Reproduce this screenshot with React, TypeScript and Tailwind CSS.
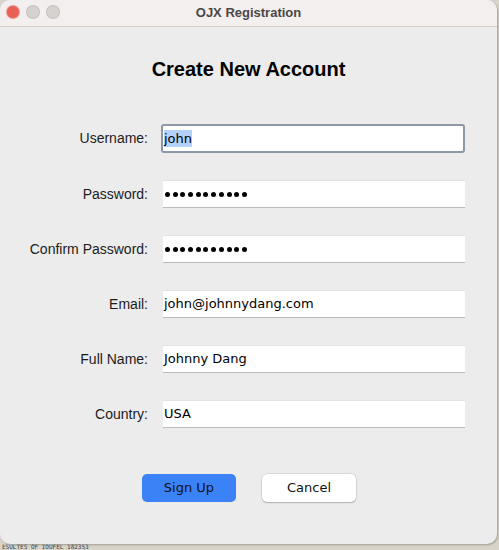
const fields = [
  { label: 'Username:', value: 'john', kind: 'focused' },
  { label: 'Password:', value: '•••••••••••', kind: 'password' },
  { label: 'Confirm Password:', value: '•••••••••••', kind: 'password' },
  { label: 'Email:', value: 'john@johnnydang.com', kind: 'text' },
  { label: 'Full Name:', value: 'Johnny Dang', kind: 'text' },
  { label: 'Country:', value: 'USA', kind: 'text' },
];

const Dots = ({ count }: { count: number }) => (
  <span aria-label="hidden password" className="flex gap-[2.7px]">
    {Array.from({ length: count }, (_, i) => (
      <span key={i} className="h-[5px] w-[5px] rounded-full bg-black" />
    ))}
  </span>
);

const App = () => {
  return (
    <div className="flex h-[550px] w-[499px] flex-col overflow-hidden bg-[#d9d4c9]">
      <div className="flex h-[544px] w-[497px] flex-col overflow-hidden rounded-[10px] bg-[#ececec] shadow-[1px_1px_2px_rgba(0,0,0,0.25)]">
        <header className="relative flex h-[27px] items-center justify-center border-b border-[#d3cfcb] bg-[#f2efee]">
          <div className="absolute left-[7px] top-[6px] flex gap-2">
            <span className="h-3 w-3 rounded-full bg-[#ec5f57] ring-1 ring-[#d6483f]/50" />
            <span className="h-3 w-3 rounded-full bg-[#d5d2d0] ring-1 ring-[#c3c0be]" />
            <span className="h-3 w-3 rounded-full bg-[#d5d2d0] ring-1 ring-[#c3c0be]" />
          </div>
          <span className="font-['Liberation_Sans',Arial,sans-serif] text-[13px] font-bold text-[#4b4747]">
            OJX Registration
          </span>
        </header>

        <main className="flex flex-1 flex-col font-['Liberation_Sans',Arial,sans-serif]">
          <h1 className="mt-[30px] text-center text-[20px] font-bold leading-[24px] text-black">Create New Account</h1>

          <div className="mt-[43px] grid grid-cols-[148px_304px] gap-x-[13px] gap-y-[27px]">
            {fields.map((f) => (
              <div key={f.label} className="contents">
                <label className="flex h-[28px] items-center justify-end text-[14px] text-[#1c1c1c]">{f.label}</label>
                {f.kind === 'focused' ? (
                  <div className="flex h-[29px] items-center rounded-[3px] border-2 border-[#8e97a6] bg-white px-[1px] font-['DejaVu_Sans',sans-serif] text-[13px] text-black">
                    <span className="bg-[#b3d1fb] leading-[17px]">{f.value}</span>
                  </div>
                ) : f.kind === 'password' ? (
                  <div className="ml-[2px] flex h-[28px] items-center border-t border-b border-t-[#e3e3e3] border-b-[#b9b9b9] bg-white pl-[2px]">
                    <Dots count={f.value.length} />
                  </div>
                ) : (
                  <div className="ml-[2px] flex h-[28px] items-center border-t border-b border-t-[#e3e3e3] border-b-[#b9b9b9] bg-white pl-[1px] font-['DejaVu_Sans',sans-serif] text-[13px] text-black">
                    {f.value}
                  </div>
                )}
              </div>
            ))}
          </div>

          <div className="mt-[46px] flex justify-center gap-[26px] pl-[1px]">
            <button
              type="button"
              className="h-[28px] w-[94px] rounded-[5px] bg-[#3b82f7] font-['DejaVu_Sans',sans-serif] text-[13px] text-[#111]"
            >
              Sign Up
            </button>
            <button
              type="button"
              className="h-[28px] w-[94px] rounded-[5px] bg-white font-['DejaVu_Sans',sans-serif] text-[13px] text-[#111] shadow-[0_0_0_0.5px_rgba(0,0,0,0.15),0_1px_1.5px_rgba(0,0,0,0.2)]"
            >
              Cancel
            </button>
          </div>
        </main>
      </div>
      <div className="flex h-[6px] items-center whitespace-nowrap pl-[2px] font-['DejaVu_Sans_Mono',monospace] text-[6px] leading-[6px] text-[#444]">
        ESULTES OF IOUFEL 182353
      </div>
    </div>
  );
};

export default App;
